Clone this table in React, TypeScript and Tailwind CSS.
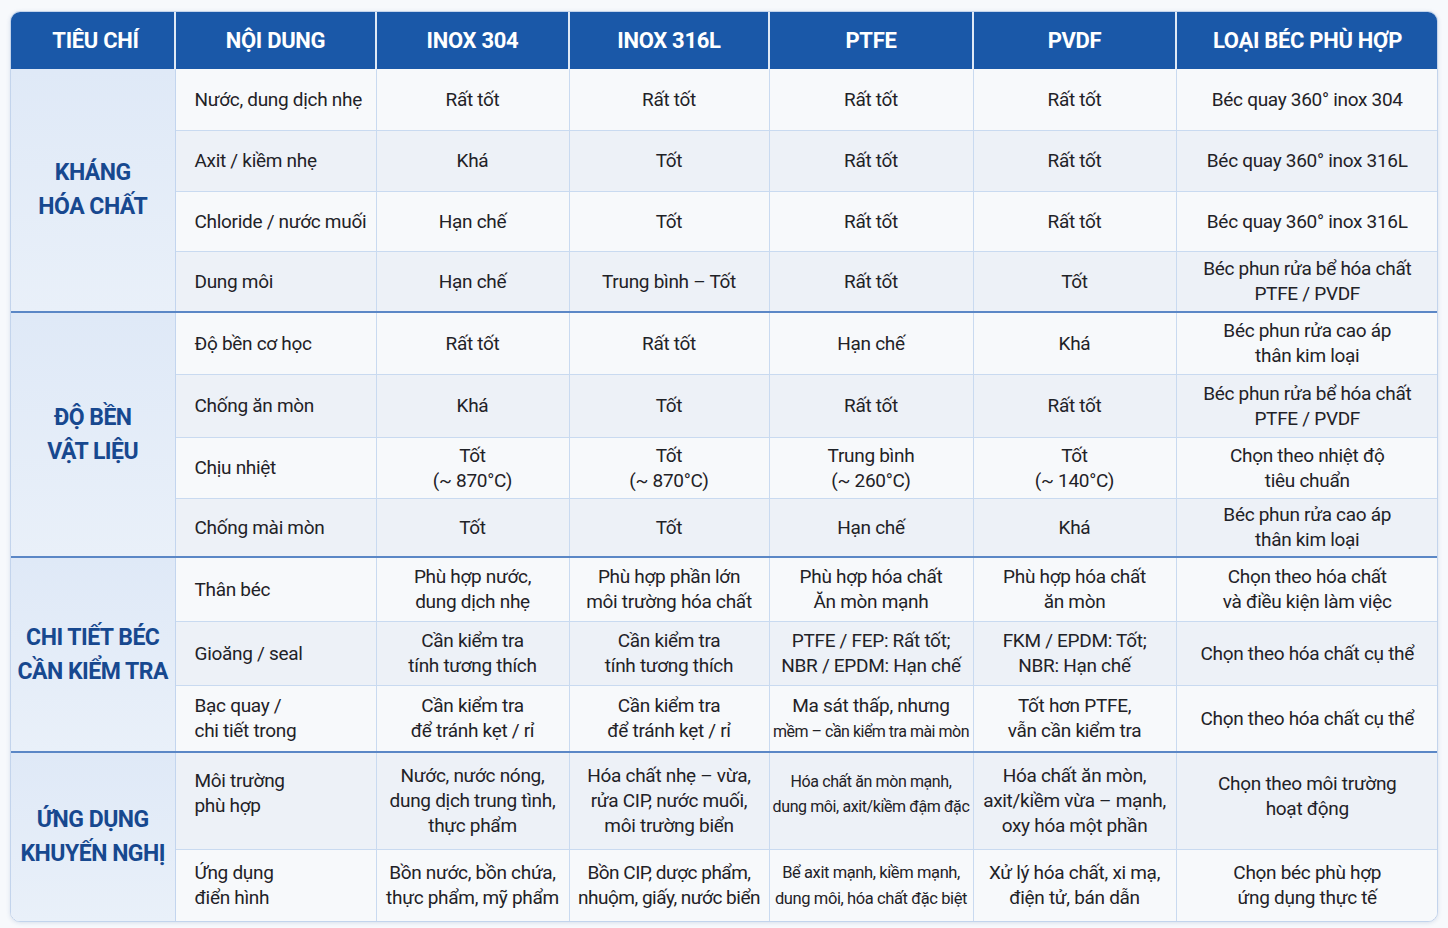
import type { ReactNode } from 'react';

type Row = { h: number; cells: ReactNode[] };
type Group = { title: string[]; rows: Row[] };

const headers = ['TIÊU CHÍ', 'NỘI DUNG', 'INOX 304', 'INOX 316L', 'PTFE', 'PVDF', 'LOẠI BÉC PHÙ HỢP'];
const widths = [164, 201, 193, 200, 204, 203, 262];

const two = (a: string, b: string) => (
  <>
    {a}
    <br />
    {b}
  </>
);

const three = (a: string, b: string, c: string) => (
  <>
    {a}
    <br />
    {b}
    <br />
    {c}
  </>
);

const groups: Group[] = [
  {
    title: ['KHÁNG', 'HÓA CHẤT'],
    rows: [
      { h: 61, cells: ['Nước, dung dịch nhẹ', 'Rất tốt', 'Rất tốt', 'Rất tốt', 'Rất tốt', 'Béc quay 360° inox 304'] },
      { h: 61, cells: ['Axit / kiềm nhẹ', 'Khá', 'Tốt', 'Rất tốt', 'Rất tốt', 'Béc quay 360° inox 316L'] },
      { h: 60, cells: ['Chloride / nước muối', 'Hạn chế', 'Tốt', 'Rất tốt', 'Rất tốt', 'Béc quay 360° inox 316L'] },
      { h: 61, cells: ['Dung môi', 'Hạn chế', 'Trung bình – Tốt', 'Rất tốt', 'Tốt', two('Béc phun rửa bể hóa chất', 'PTFE / PVDF')] },
    ],
  },
  {
    title: ['ĐỘ BỀN', 'VẬT LIỆU'],
    rows: [
      { h: 62, cells: ['Độ bền cơ học', 'Rất tốt', 'Rất tốt', 'Hạn chế', 'Khá', two('Béc phun rửa cao áp', 'thân kim loại')] },
      { h: 63, cells: ['Chống ăn mòn', 'Khá', 'Tốt', 'Rất tốt', 'Rất tốt', two('Béc phun rửa bể hóa chất', 'PTFE / PVDF')] },
      {
        h: 61,
        cells: [
          'Chịu nhiệt',
          two('Tốt', '(~ 870°C)'),
          two('Tốt', '(~ 870°C)'),
          two('Trung bình', '(~ 260°C)'),
          two('Tốt', '(~ 140°C)'),
          two('Chọn theo nhiệt độ', 'tiêu chuẩn'),
        ],
      },
      { h: 59, cells: ['Chống mài mòn', 'Tốt', 'Tốt', 'Hạn chế', 'Khá', two('Béc phun rửa cao áp', 'thân kim loại')] },
    ],
  },
  {
    title: ['CHI TIẾT BÉC', 'CẦN KIỂM TRA'],
    rows: [
      {
        h: 64,
        cells: [
          'Thân béc',
          two('Phù hợp nước,', 'dung dịch nhẹ'),
          two('Phù hợp phần lớn', 'môi trường hóa chất'),
          two('Phù hợp hóa chất', 'Ăn mòn mạnh'),
          two('Phù hợp hóa chất', 'ăn mòn'),
          two('Chọn theo hóa chất', 'và điều kiện làm việc'),
        ],
      },
      {
        h: 64,
        cells: [
          'Gioăng / seal',
          two('Cần kiểm tra', 'tính tương thích'),
          two('Cần kiểm tra', 'tính tương thích'),
          two('PTFE / FEP: Rất tốt;', 'NBR / EPDM: Hạn chế'),
          two('FKM / EPDM: Tốt;', 'NBR: Hạn chế'),
          'Chọn theo hóa chất cụ thể',
        ],
      },
      {
        h: 67,
        cells: [
          two('Bạc quay /', 'chi tiết trong'),
          two('Cần kiểm tra', 'để tránh kẹt / rỉ'),
          two('Cần kiểm tra', 'để tránh kẹt / rỉ'),
          <>
            Ma sát thấp, nhưng
            <br />
            <span className="text-[16px] tracking-[-0.5px]">mềm – cần kiểm tra mài mòn</span>
          </>,
          two('Tốt hơn PTFE,', 'vẫn cần kiểm tra'),
          'Chọn theo hóa chất cụ thể',
        ],
      },
    ],
  },
  {
    title: ['ỨNG DỤNG', 'KHUYẾN NGHỊ'],
    rows: [
      {
        h: 97,
        cells: [
          <div className="-mt-[16px]">{two('Môi trường', 'phù hợp')}</div>,
          three('Nước, nước nóng,', 'dung dịch trung tình,', 'thực phẩm'),
          three('Hóa chất nhẹ – vừa,', 'rửa CIP, nước muối,', 'môi trường biển'),
          <div className="-mt-[14px] text-[16px] tracking-[-0.4px]">{two('Hóa chất ăn mòn mạnh,', 'dung môi, axit/kiềm đậm đặc')}</div>,
          three('Hóa chất ăn mòn,', 'axit/kiềm vừa – mạnh,', 'oxy hóa một phần'),
          <div className="-mt-[10px]">{two('Chọn theo môi trường', 'hoạt động')}</div>,
        ],
      },
      {
        h: 72,
        cells: [
          two('Ứng dụng', 'điển hình'),
          two('Bồn nước, bồn chứa,', 'thực phẩm, mỹ phẩm'),
          <span className="tracking-[-0.5px]">{two('Bồn CIP, dược phẩm,', 'nhuộm, giấy, nước biển')}</span>,
          <span className="tracking-[-0.4px] text-[16.5px]">{two('Bể axit mạnh, kiềm mạnh,', 'dung môi, hóa chất đặc biệt')}</span>,
          two('Xử lý hóa chất, xi mạ,', 'điện tử, bán dẫn'),
          two('Chọn béc phù hợp', 'ứng dụng thực tế'),
        ],
      },
    ],
  },
];

export default function App() {
  let rowIndex = 0;
  return (
    <div
      className="w-[1448px] h-[928px] bg-[#f7f9fc] pl-[10px] pt-[11px]"
      style={{ fontFamily: '"Roboto", "Liberation Sans", sans-serif' }}
    >
      <div className="w-[1428px] rounded-[10px] overflow-hidden border border-[#c3d4ec] shadow-[0_1px_4px_rgba(40,80,140,0.15)] bg-white">
        <table className="w-full table-fixed border-collapse text-[#1f2227] text-[19px] tracking-[-0.3px] leading-[25px]">
          <colgroup>
            {widths.map((w, i) => (
              <col key={i} style={{ width: w }} />
            ))}
          </colgroup>
          <thead>
            <tr className="h-[57px] bg-[#1a58a8]">
              {headers.map((h, i) => (
                <th
                  key={h}
                  className={`text-white font-bold text-[22px] tracking-[-0.3px] whitespace-nowrap text-center align-middle ${
                    i > 0 ? 'border-l-2 border-[#dfe9f6]' : ''
                  } ${i === 0 ? 'pl-[6px]' : ''}`}
                >
                  {h}
                </th>
              ))}
            </tr>
          </thead>
          <tbody>
            {groups.map((g, gi) =>
              g.rows.map((r, ri) => {
                const alt = rowIndex++ % 2 === 1;
                const first = ri === 0;
                return (
                  <tr
                    key={`${gi}-${ri}`}
                    style={{ height: r.h }}
                    className={`${alt ? 'bg-[#edf1f7]' : 'bg-[#f7f9fb]'} ${
                      first && gi > 0 ? 'border-t-2 border-[#5b87c6]' : ri > 0 ? 'border-t border-[#c9daf0]' : ''
                    }`}
                  >
                    {first && (
                      <td
                        rowSpan={g.rows.length}
                        className="bg-gradient-to-b from-[#dfe9f7] to-[#e9f0f9] text-center align-middle font-bold text-[#17488f] text-[23px] tracking-[-0.5px] leading-[34px] whitespace-nowrap border-r border-[#c3d5ee]"
                      >
                        {g.title[0]}
                        <br />
                        {g.title[1]}
                      </td>
                    )}
                    {r.cells.map((c, ci) => (
                      <td
                        key={ci}
                        className={`align-middle whitespace-nowrap ${
                          ci === 0 ? 'text-left pl-[19px]' : 'text-center'
                        } ${ci > 0 ? 'border-l border-[#c9daf0]' : ''}`}
                      >
                        {c}
                      </td>
                    ))}
                  </tr>
                );
              })
            )}
          </tbody>
        </table>
      </div>
    </div>
  );
}
